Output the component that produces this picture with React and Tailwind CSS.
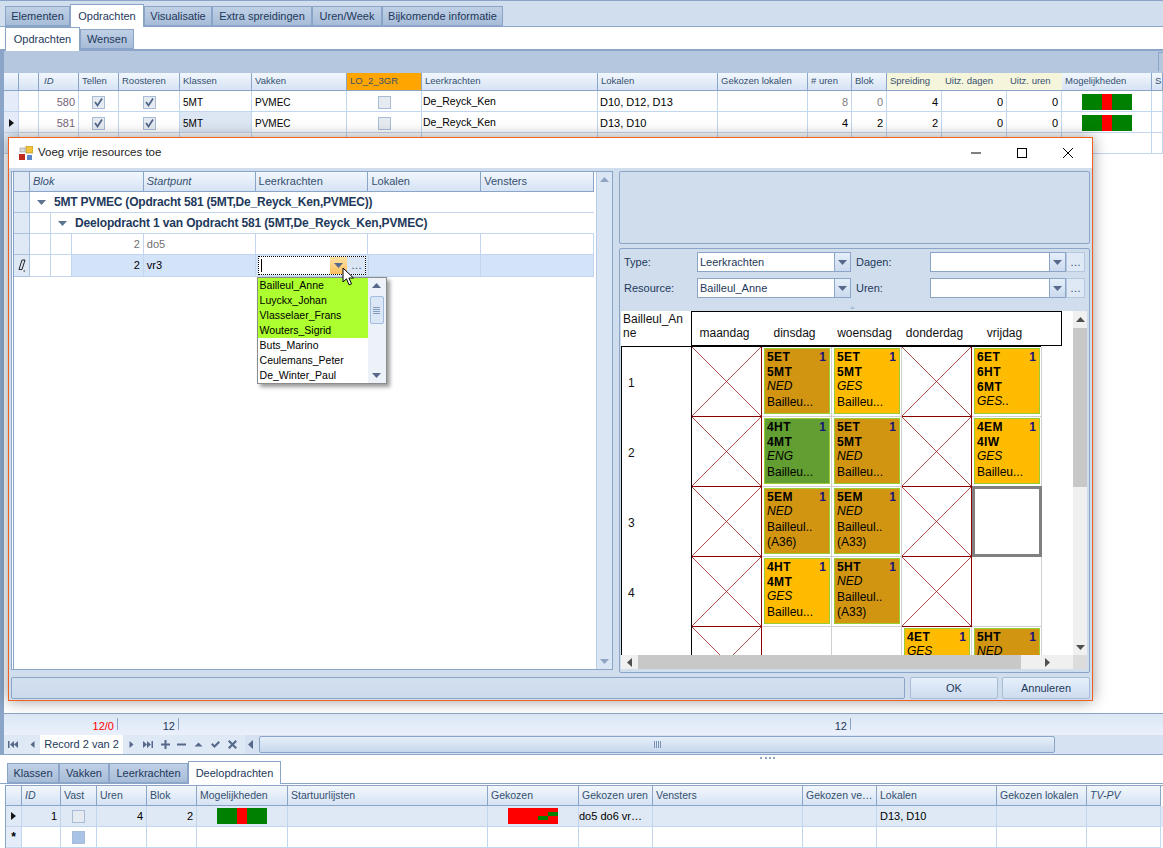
import React from "react";

const topCols =
  "grid grid-cols-[15px_20px_40px_40px_61px_72px_95px_75px_176px_120px_90px_44px_35px_55px_65px_55px_90px_11px]";
const subCols =
  "grid grid-cols-[16px_39px_36px_50px_50px_91px_200px_91px_74px_150px_74px_120px_90px_74px]";

const Arrow = ({ up, className = "" }) => (
  <svg width="9" height="5" viewBox="0 0 9 5" className={className}>
    <path d={up ? "M0 5 L4.5 0 L9 5 Z" : "M0 0 L9 0 L4.5 5 Z"} fill="currentColor" />
  </svg>
);

const RowPointer = () => (
  <svg width="5" height="8" viewBox="0 0 5 8">
    <path d="M0 0 L5 4 L0 8 Z" fill="#111" />
  </svg>
);

const Check = ({ checked, blue }) => (
  <span
    className={
      "flex w-[13px] h-[13px] items-center justify-center border border-[#a9bcd6] " +
      (blue ? "bg-[#a9c3e6]" : "bg-[#e6ebf2]")
    }
  >
    {checked && (
      <svg width="9" height="9" viewBox="0 0 9 9">
        <path d="M1 4 L3.5 7.5 L8 0.5" fill="none" stroke="#4d6388" strokeWidth="1.7" />
      </svg>
    )}
  </span>
);

const MiniBar = () => (
  <div className="w-[50px] h-[16px] flex">
    <div className="w-[20px] bg-[#008000]" />
    <div className="w-[10px] bg-[#ff0000]" />
    <div className="w-[20px] bg-[#008000]" />
  </div>
);

const ChosenBar = () => (
  <div className="relative w-[50px] h-[16px] bg-[#ff0000]">
    <div className="absolute left-[30px] top-[8px] w-[10px] h-[4px] bg-[#008000]" />
    <div className="absolute left-[40px] top-[4px] w-[10px] h-[4px] bg-[#008000]" />
  </div>
);

const Head = ({ children, className = "" }) => (
  <div
    className={
      "flex items-center px-[3px] border-r border-b border-[#8ba5c8] text-[#35506f] whitespace-nowrap overflow-hidden " +
      (className || "bg-gradient-to-b from-[#f2f7fd] to-[#d6e3f4]")
    }
  >
    {children}
  </div>
);

const Cell = ({ children, className = "" }) => (
  <div
    className={
      "flex items-center px-[3px] border-r border-b border-[#c3d6f0] whitespace-nowrap overflow-hidden " +
      className
    }
  >
    {children}
  </div>
);

const Tab = ({ children, active, className = "" }) => (
  <div
    className={
      "flex items-center justify-center border border-[#8ba5c8] text-[#1e395b] " +
      (active
        ? "bg-white z-10 border-b-0 "
        : "bg-gradient-to-b from-[#c0d1e6] to-[#a7bcd8] ") +
      className
    }
  >
    {children}
  </div>
);

function MainGrid() {
  const heads = ["", "", "ID", "Tellen", "Roosteren", "Klassen", "Vakken", "LO_2_3GR", "Leerkrachten", "Lokalen", "Gekozen lokalen", "# uren", "Blok", "Spreiding", "Uitz. dagen", "Uitz. uren", "Mogelijkheden", "S"];
  const rows = [
    { id: "580", lok: "D10, D12, D13", ur: "8", blok: "0", spr: "4" },
    { id: "581", lok: "D13, D10", ur: "4", blok: "2", spr: "2", cur: true },
  ];
  return (
    <div className="text-[11px] text-black">
      <div className={topCols + " h-[18px] text-[9.5px]"}>
        {heads.map((h, i) => (
          <Head
            key={i}
            className={
              i === 7
                ? "bg-[#ffa500]"
                : i >= 13 && i <= 15
                ? "bg-[#f5f5dc] !border-r-0"
                : ""
            }
          >
            {i === 2 ? <i className="pl-[2px]">{h}</i> : h}
          </Head>
        ))}
      </div>
      {rows.map((r) => (
        <div key={r.id} className={topCols + " h-[21px] [&>div]:pt-[2px]"}>
          <Cell className="bg-[#e3ecf8] justify-center !px-0">{r.cur && <RowPointer />}</Cell>
          <Cell />
          <Cell className="justify-end text-[#77657a]">{r.id}</Cell>
          <Cell className="justify-center"><Check checked /></Cell>
          <Cell className="justify-center"><Check checked /></Cell>
          <Cell className={"text-[10px] " + (r.cur ? "bg-[#dde7f4]" : "")}>5MT</Cell>
          <Cell className="text-[10px]">PVMEC</Cell>
          <Cell className="justify-center"><Check /></Cell>
          <Cell className="text-[10.5px] !pl-[1px]">De_Reyck_Ken</Cell>
          <Cell className="!pl-[2px]">{r.lok}</Cell>
          <Cell />
          <Cell className={"justify-end " + (r.cur ? "" : "text-[#808080]")}>{r.ur}</Cell>
          <Cell className={"justify-end " + (r.cur ? "" : "text-[#808080]")}>{r.blok}</Cell>
          <Cell className="justify-end">{r.spr}</Cell>
          <Cell className="justify-end">0</Cell>
          <Cell className="justify-end">0</Cell>
          <Cell className="justify-center"><MiniBar /></Cell>
          <Cell />
        </div>
      ))}
      <div className={topCols + " h-[21px]"}>
        {heads.map((h, i) => (
          <Cell key={i} className={i === 0 ? "bg-[#e3ecf8]" : ""} />
        ))}
      </div>
    </div>
  );
}

const NavIcon = ({ d }) => (
  <svg width="11" height="11" viewBox="0 0 11 11" className="text-[#56698a]">
    <path d={d} fill="currentColor" />
  </svg>
);

function Footer() {
  const nav = [
    "M1 2h1.5v7H1Z M7 2v7L3 5.5Z M11 2v7L7 5.5Z",
    "M7.5 2v7L3.5 5.5Z",
  ];
  const navAfter = [
    "M3.5 2v7l4-3.5Z",
    "M0 2v7l4-3.5Z M4 2v7l4-3.5Z M8.5 2H10v7H8.5Z",
    "M4.5 1h2v3.5H10v2H6.5V10h-2V6.5H1v-2h3.5Z",
    "M1 4.5h9v2H1Z",
    "M1.5 7.5 5.5 3.5 9.5 7.5Z",
    "M1 5.5 2.5 4 4.5 6 8.5 2 10 3.5 4.5 9Z",
    "M1 2.5 2.5 1 5.5 4 8.5 1 10 2.5 7 5.5 10 8.5 8.5 10 5.5 7 2.5 10 1 8.5 4 5.5Z",
  ];
  return (
    <div className="text-[11px]">
      <div className={topCols + " h-[22px] border-t border-[#8ba5c8] bg-gradient-to-b from-[#dce7f5] to-[#eaf1fb]"}>
        {Array.from({ length: 18 }).map((_, i) => (
          <div key={i} className="relative flex items-center justify-end pr-[5px] pt-[3px] text-[#1e395b]">
            {i === 3 && <span className="text-[#ff0000]">12/0</span>}
            {i === 4 && <span>12</span>}
            {i === 11 && <span>12</span>}
            {(i === 3 || i === 4 || i === 11) && (
              <span className="absolute right-[1px] top-[4px] h-[12px] w-px bg-[#8ba5c8]" />
            )}
          </div>
        ))}
      </div>
      <div className="flex items-center h-[19px] bg-[#dfe9f6]">
        <div className="flex w-[36px] justify-between pl-[3px] pr-[2px]">
          {nav.map((d) => (
            <NavIcon key={d} d={d} />
          ))}
        </div>
        <div className="flex items-center justify-center w-[83px] h-full bg-white text-[11px] text-[#1e395b]">
          Record 2 van 2
        </div>
        <div className="flex w-[122px] justify-between pl-[3px] pr-[7px]">
          {navAfter.map((d) => (
            <NavIcon key={d} d={d} />
          ))}
        </div>
        <div className="flex items-center h-full flex-1 bg-[#d6e2f2]">
          <Arrow className="rotate-90 ml-[1px] text-[#56698a]" />
          <div className="ml-[4px] w-[796px] h-[17px] rounded-[2px] border border-[#8ba5c8] bg-gradient-to-b from-[#e6effa] to-[#c7d7ec] flex items-center justify-center gap-px">
            <span className="w-px h-[7px] bg-[#7d93b4]" />
            <span className="w-px h-[7px] bg-[#7d93b4]" />
            <span className="w-px h-[7px] bg-[#7d93b4]" />
            <span className="w-px h-[7px] bg-[#7d93b4]" />
          </div>
        </div>
      </div>
    </div>
  );
}

function DetailPart() {
  const heads = ["", "ID", "Vast", "Uren", "Blok", "Mogelijkheden", "Startuurlijsten", "Gekozen", "Gekozen uren", "Vensters", "Gekozen ve…", "Lokalen", "Gekozen lokalen", "TV-PV"];
  return (
    <div className="h-[94px] bg-white text-[11px] text-black border-t border-[#8ba5c8]">
      <div className="relative flex justify-center h-[7px]">
        <span className="absolute left-[760px] top-[2px] w-[15px] h-[2px] border-t-2 border-dotted border-[#8ba5c8]" />
      </div>
      <div className="flex pl-[7px] h-[22px] items-end border-b border-[#8ba5c8] text-[11px]">
        <Tab className="w-[52px] h-[20px]">Klassen</Tab>
        <Tab className="w-[50px] h-[20px]">Vakken</Tab>
        <Tab className="w-[79px] h-[20px]">Leerkrachten</Tab>
        <Tab active className="w-[93px] h-[23px] -mb-px">Deelopdrachten</Tab>
      </div>
      <div className="pl-[5px] pt-px">
        <div className={subCols + " h-[21px] border-t border-l border-[#8ba5c8] text-[10.5px]"}>
          {heads.map((h, i) => (
            <Head key={i}>{i === 1 || i === 13 ? <i>{h}</i> : h}</Head>
          ))}
        </div>
        <div className={subCols + " h-[21px] bg-[#dfe9f5] border-l border-[#8ba5c8]"}>
          <Cell className="justify-center !px-0"><RowPointer /></Cell>
          <Cell className="justify-end">1</Cell>
          <Cell className="justify-center"><Check /></Cell>
          <Cell className="justify-end">4</Cell>
          <Cell className="justify-end">2</Cell>
          <Cell className="justify-center"><MiniBar /></Cell>
          <Cell />
          <Cell className="justify-center"><ChosenBar /></Cell>
          <Cell className="!pl-0">do5 do6 vr…</Cell>
          <Cell />
          <Cell />
          <Cell>D13, D10</Cell>
          <Cell />
          <Cell />
        </div>
        <div className={subCols + " h-[21px] border-l border-[#8ba5c8]"}>
          <Cell className="justify-center !px-0 bg-[#e3ecf8] text-[12px] font-bold">*</Cell>
          <Cell />
          <Cell className="justify-center"><Check blue /></Cell>
          {heads.slice(3).map((h) => (
            <Cell key={h} />
          ))}
        </div>
      </div>
    </div>
  );
}

function ResourceGrid() {
  const list = ["Bailleul_Anne", "Luyckx_Johan", "Vlasselaer_Frans", "Wouters_Sigrid", "Buts_Marino", "Ceulemans_Peter", "De_Winter_Paul"];
  const sel = "w-[16px] shrink-0 bg-[#dfe9f6] border-r border-b border-[#a9c0de] flex items-center justify-center";
  const line = "border-r border-b border-[#c3d6f0]";
  return (
    <div className="flex w-[602px] h-[499px] border border-[#8ba5c8] bg-white pl-px pr-0 text-[11px]">
      <div className="w-[581px] shrink-0 border-l border-[#8ba5c8]">
        <div className="flex h-[20px] text-[#35506f]">
          <Head className="w-[16px] bg-[#dfe9f6]" />
          <Head className="w-[114px] bg-gradient-to-b from-[#f2f7fd] to-[#d6e3f4]"><i>Blok</i></Head>
          <Head className="w-[112px] bg-gradient-to-b from-[#f2f7fd] to-[#d6e3f4]"><i>Startpunt</i></Head>
          <Head className="w-[113px] bg-gradient-to-b from-[#f2f7fd] to-[#d6e3f4]">Leerkrachten</Head>
          <Head className="w-[113px] bg-gradient-to-b from-[#f2f7fd] to-[#d6e3f4]">Lokalen</Head>
          <Head className="w-[113px] bg-gradient-to-b from-[#f2f7fd] to-[#d6e3f4]">Vensters</Head>
        </div>
        <div className="flex h-[21px]">
          <div className={sel} />
          <div className="flex items-center flex-1 pl-[7px] border-b border-[#c3d6f0] font-bold text-[12px] tracking-[-0.2px] text-[#1e395b] whitespace-nowrap">
            <Arrow className="mr-[8px] text-[#5d7390]" />
            5MT PVMEC (Opdracht 581 (5MT,De_Reyck_Ken,PVMEC))
          </div>
        </div>
        <div className="flex h-[21px]">
          <div className={sel} />
          <div className={"w-[21px] " + line} />
          <div className="flex items-center flex-1 pl-[7px] border-b border-[#c3d6f0] font-bold text-[12px] tracking-[-0.15px] text-[#1e395b] whitespace-nowrap">
            <Arrow className="mr-[8px] text-[#5d7390]" />
            Deelopdracht 1 van Opdracht 581 (5MT,De_Reyck_Ken,PVMEC)
          </div>
        </div>
        <div className="flex h-[21px]">
          <div className={sel} />
          <div className={"w-[21px] " + line} />
          <div className={"w-[21px] " + line} />
          <div className={"w-[72px] flex items-center justify-end pr-[3px] text-[#707070] " + line}>2</div>
          <div className={"w-[112px] flex items-center pl-[3px] text-[#707070] " + line}>do5</div>
          <div className={"w-[113px] " + line} />
          <div className={"w-[113px] " + line} />
          <div className={"w-[113px] " + line} />
        </div>
        <div className="flex h-[22px]">
          <div className={sel}>
            <svg width="9" height="13" viewBox="0 0 9 13">
              <path d="M5 1h3L5 10.5H2Z" fill="none" stroke="#222" strokeWidth="1" />
              <path d="M6.5 12h1.5" stroke="#222" strokeWidth="1.2" />
            </svg>
          </div>
          <div className={"w-[21px] " + line} />
          <div className={"w-[21px] " + line} />
          <div className={"w-[72px] flex items-center justify-end pr-[3px] bg-[#d3e3f8] " + line}>2</div>
          <div className={"w-[112px] flex items-center pl-[3px] bg-[#d3e3f8] " + line}>vr3</div>
          <div className="relative w-[113px] bg-[#d3e3f8] border-b border-[#c3d6f0] px-[2px] py-px">
            <div className="flex h-[19px] border border-dotted border-black bg-white">
              <div className="flex-1 flex items-center pl-[2px]"><span className="w-px h-[13px] bg-black" /></div>
              <div className="w-[17px] flex items-center justify-center bg-gradient-to-b from-[#ffe3a3] to-[#fbbf5d] text-[#56698a]"><Arrow /></div>
              <div className="w-[18px] flex items-center justify-center bg-[#dbe6f4] text-[#35506f] text-[11px]">…</div>
            </div>
            <div className="absolute left-[1px] top-[22px] z-20 flex w-[130px] h-[107px] border border-[#8c8c8c] bg-white shadow-[3px_3px_4px_rgba(0,0,0,0.4)]">
              <div className="w-[110px] shrink-0 text-[10.5px] leading-[15px]">
                {list.map((n, i) => (
                  <div key={n} className={"pl-[2px] " + (i < 4 ? "bg-[#adff2f]" : "")}>{n}</div>
                ))}
              </div>
              <div className="flex-1 flex flex-col items-center justify-between py-[5px] bg-[#edf2f9] text-[#56698a]">
                <Arrow up />
                <div className="flex flex-col items-center justify-center gap-px w-[14px] h-[28px] -mt-[41px] rounded-[2px] border border-[#a3bbdc] bg-[#dbe7f6]">
                  <span className="w-[7px] h-px bg-[#8199ba]" />
                  <span className="w-[7px] h-px bg-[#8199ba]" />
                  <span className="w-[7px] h-px bg-[#8199ba]" />
                  <span className="w-[7px] h-px bg-[#8199ba]" />
                </div>
                <Arrow />
              </div>
            </div>
            <svg width="12" height="19" viewBox="0 0 12 19" className="absolute left-[86px] top-[12px] z-30">
              <path d="M1 1v14l3.5-3.2 2.5 6 2.5-1-2.6-5.8h4.6Z" fill="#fff" stroke="#000" strokeWidth="1" />
            </svg>
          </div>
          <div className="w-[113px] bg-[#d3e3f8] border-r border-l border-b border-[#c3d6f0]" />
          <div className="w-[113px] bg-[#d3e3f8] border-r border-b border-[#c3d6f0]" />
        </div>
      </div>
      <div className="ml-[2px] w-[16px] flex flex-col items-center justify-between py-[5px] bg-[#dbe6f4] border-l border-[#b9cce5] text-[#8ea4c2]">
        <Arrow up />
        <Arrow />
      </div>
    </div>
  );
}

const Combo = ({ value, w }) => (
  <div className={"flex h-[20px] border border-[#8ba5c8] bg-white " + w}>
    <div className="flex-1 flex items-center pl-[2px] text-[11px] text-[#1e395b]">{value}</div>
    <div className="w-[16px] flex items-center justify-center border-l border-[#8ba5c8] bg-gradient-to-b from-[#e6effa] to-[#cbdaee] text-[#56698a]">
      <Arrow />
    </div>
  </div>
);

const DotBtn = () => (
  <div className="flex items-center justify-center w-[19px] h-[20px] border border-[#b5c7df] bg-[#dfe9f6] text-[#35506f] text-[11px]">…</div>
);

const gold = "bg-[#ffbb00]";
const dark = "bg-[#d19512]";
const green = "bg-[#629e32]";
const X = { x: true };
const E = {};
const rowsData = [
  [X, { bg: dark, b: ["5ET", "5MT"], i: "NED", l: ["Bailleu..."] }, { bg: gold, b: ["5ET", "5MT"], i: "GES", l: ["Bailleu..."] }, X, { bg: gold, b: ["6ET", "6HT", "6MT"], i: "GES..", l: [] }],
  [X, { bg: green, b: ["4HT", "4MT"], i: "ENG", l: ["Bailleu..."] }, { bg: dark, b: ["5ET", "5MT"], i: "NED", l: ["Bailleu..."] }, X, { bg: gold, b: ["4EM", "4IW"], i: "GES", l: ["Bailleu..."] }],
  [X, { bg: dark, b: ["5EM"], i: "NED", l: ["Bailleul..", "(A36)"] }, { bg: dark, b: ["5EM"], i: "NED", l: ["Bailleul..", "(A33)"] }, X, { sel: true }],
  [X, { bg: gold, b: ["4HT", "4MT"], i: "GES", l: ["Bailleu..."] }, { bg: dark, b: ["5HT"], i: "NED", l: ["Bailleul..", "(A33)"] }, X, E],
  [X, E, E, { bg: gold, b: ["4ET"], i: "GES", l: ["Bailleu..."] }, { bg: dark, b: ["5HT"], i: "NED", l: ["Bailleul..", "(A33)"] }],
];

function SlotCell({ s }) {
  if (s.x) {
    return (
      <div className="h-[70px] border-r border-b border-[#8b0000]">
        <svg width="100%" height="100%" viewBox="0 0 69 69" preserveAspectRatio="none" className="block">
          <path d="M0 0 L69 69 M69 0 L0 69" stroke="#8b0000" strokeWidth="0.7" fill="none" />
        </svg>
      </div>
    );
  }
  if (s.sel) {
    return <div className="h-[71px] -mt-px border-[3px] border-[#808080] bg-white" />;
  }
  if (!s.bg) {
    return <div className="h-[70px] border-r border-b border-[#d0d0d0]" />;
  }
  return (
    <div className="h-[70px] border-r border-b border-[#d0d0d0] pl-[2px] pt-px pr-px pb-[2px]">
      <div className={"relative h-full border border-[#9acd32] pl-[2px] pt-px text-[12px] leading-[15px] text-black overflow-hidden " + s.bg}>
        <span className="absolute right-[3px] top-px font-bold text-[#14147d]">1</span>
        {s.b.map((b) => (
          <div key={b} className="font-bold tracking-[0.4px]">{b}</div>
        ))}
        <div className="italic -mt-px mb-px">{s.i}</div>
        {s.l.map((l) => (
          <div key={l}>{l}</div>
        ))}
      </div>
    </div>
  );
}

function Schedule() {
  const days = ["maandag", "dinsdag", "woensdag", "donderdag", "vrijdag"];
  return (
    <div className="ml-px w-[466px] h-[358px] bg-white text-[12px] flex flex-col">
      <div className="flex h-[344px]">
        <div className="w-[452px] overflow-hidden">
          <div className="flex h-[35px]">
            <div className="w-[70px] pl-[2px] pr-[6px] pt-px leading-[14px] break-all text-[#111]">Bailleul_Anne</div>
            <div className="w-[371px] h-[35px] border border-black grid grid-cols-[70px_70px_70px_70px_70px] items-end pb-[3px] text-[#111]">
              {days.map((d) => (
                <div key={d} className="text-center pr-[5px]">{d}</div>
              ))}
            </div>
          </div>
          <div className="grid grid-cols-[70px_70px_70px_70px_70px_70px] w-[420px] border-l border-t border-black">
            {rowsData.map((row, r) => (
              <React.Fragment key={r}>
                <div className="h-[70px] flex items-center pl-[6px] pt-[2px] border-r border-black text-[#111]">
                  {r < 4 ? r + 1 : ""}
                </div>
                {row.map((s, c) => (
                  <SlotCell key={c} s={s} />
                ))}
              </React.Fragment>
            ))}
          </div>
        </div>
        <div className="w-[14px] flex flex-col items-center bg-[#f0f0f0] text-[#505050]">
          <div className="h-[17px] flex items-center"><Arrow up /></div>
          <div className="w-full h-[159px] bg-[#c8c8c8]" />
          <div className="flex-1 flex items-end pb-[5px]"><Arrow /></div>
        </div>
      </div>
      <div className="flex h-[14px]">
        <div className="w-[452px] flex items-center bg-[#f0f0f0] text-[#505050]">
          <div className="w-[17px] flex justify-center"><Arrow className="rotate-90" /></div>
          <div className="w-[383px] h-full bg-[#c8c8c8]" />
          <div className="flex-1 flex justify-center"><Arrow className="-rotate-90" /></div>
        </div>
        <div className="flex-1 bg-[#dcdcdc]" />
      </div>
    </div>
  );
}

function RightPanel() {
  return (
    <div className="w-[471px] flex flex-col gap-[4px]">
      <div className="h-[73px] rounded-[2px] border border-[#8ba5c8]" />
      <div className="h-[425px] rounded-[2px] border border-[#8ba5c8] pt-[3px]">
        <div className="flex flex-col gap-[6px] pl-[4px] text-[11px] text-[#1e395b]">
          <div className="flex items-center">
            <span className="w-[73px]">Type:</span>
            <Combo value="Leerkrachten" w="w-[154px]" />
            <span className="w-[79px] pl-[5px]">Dagen:</span>
            <Combo w="w-[136px]" />
            <DotBtn />
          </div>
          <div className="flex items-center">
            <span className="w-[73px]">Resource:</span>
            <Combo value="Bailleul_Anne" w="w-[154px]" />
            <span className="w-[79px] pl-[5px]">Uren:</span>
            <Combo w="w-[136px]" />
            <DotBtn />
          </div>
        </div>
        <div className="flex justify-center h-[13px] pt-[8px] pr-[4px] text-[#a9bcd6]">
          <svg width="5" height="3" viewBox="0 0 5 3"><path d="M0 3 L2.5 0 L5 3Z" fill="currentColor" /></svg>
        </div>
        <Schedule />
      </div>
    </div>
  );
}

function Dialog() {
  return (
    <div className="absolute left-[8px] top-[137px] z-20 w-[1085px] h-[564px] flex flex-col border border-[#f0601c] bg-[#cfdded] shadow-[0_0_14px_rgba(0,0,0,0.4)]">
      <div className="h-[30px] shrink-0 flex items-center bg-white">
        <svg width="14" height="14" viewBox="0 0 14 14" className="ml-[10px] mr-[5px]">
          <rect x="0" y="8" width="6" height="6" fill="#c02a1c" />
          <rect x="7" y="0" width="7" height="7" fill="#f3c33a" stroke="#a98a2b" strokeWidth="0.7" />
          <rect x="8" y="9" width="5" height="5" fill="#5b86c9" />
          <rect x="1" y="2" width="5" height="4" fill="#d8d8d8" stroke="#888" strokeWidth="0.5" />
        </svg>
        <span className="text-[11.5px] text-[#222]">Voeg vrije resources toe</span>
        <div className="ml-auto flex items-center">
          <svg width="46" height="20" viewBox="0 0 46 20"><path d="M18 10h10" stroke="#000" strokeWidth="1" /></svg>
          <svg width="46" height="20" viewBox="0 0 46 20"><rect x="18.5" y="5.5" width="9" height="9" fill="none" stroke="#000" strokeWidth="1" /></svg>
          <svg width="46" height="20" viewBox="0 0 46 20" className="mr-[1px]"><path d="M18 5 L28 15 M28 5 L18 15" stroke="#000" strokeWidth="1" /></svg>
        </div>
      </div>
      <div className="flex-1 flex flex-col pl-[2px] pt-[3px] pr-[1px]">
        <div className="flex gap-[6px]">
          <ResourceGrid />
          <RightPanel />
        </div>
        <div className="flex mt-[4px] h-[22px] text-[11px] text-[#1e395b]">
          <div className="w-[894px] rounded-[2px] border border-[#8ba5c8] bg-gradient-to-b from-[#d3e0f0] to-[#cbdaec]" />
          <div className="ml-[5px] w-[88px] flex items-center justify-center rounded-[2px] border border-[#a9bcd6] bg-gradient-to-b from-[#e6f0fb] to-[#cddcef]">OK</div>
          <div className="ml-[4px] w-[88px] flex items-center justify-center rounded-[2px] border border-[#a9bcd6] bg-gradient-to-b from-[#e6f0fb] to-[#cddcef]">Annuleren</div>
        </div>
      </div>
    </div>
  );
}

export default function App() {
  return (
    <div className="relative w-[1163px] h-[848px] overflow-hidden bg-white font-['Liberation_Sans',sans-serif] text-[11px] flex flex-col">
      <div className="h-[27px] shrink-0 flex items-end pl-[5px] bg-[#d0deee] border-t border-[#8ba5c8] border-b">
        <Tab className="w-[65px] h-[20px]">Elementen</Tab>
        <Tab active className="w-[74px] h-[23px] -mb-px">Opdrachten</Tab>
        <Tab className="w-[68px] h-[20px]">Visualisatie</Tab>
        <Tab className="w-[100px] h-[20px]">Extra spreidingen</Tab>
        <Tab className="w-[70px] h-[20px]">Uren/Week</Tab>
        <Tab className="w-[121px] h-[20px]">Bijkomende informatie</Tab>
      </div>
      <div className="h-[24px] shrink-0 flex items-end pl-[5px] border-b-2 border-[#8ba5c8]">
        <Tab active className="w-[75px] h-[24px] -mb-[2px]">Opdrachten</Tab>
        <Tab className="w-[54px] h-[20px]">Wensen</Tab>
      </div>
      <div className="flex-1 flex flex-col border-l-4 border-[#8ba5c8]">
        <div className="h-[22px] shrink-0 bg-[#b4c7df] flex justify-end items-start pt-px">
          <span className="w-[5px] h-[19px] border-l border-t border-[#8ba5c8]" />
        </div>
        <MainGrid />
        <div className="flex-1" />
        <Footer />
      </div>
      <DetailPart />
      <Dialog />
    </div>
  );
}
